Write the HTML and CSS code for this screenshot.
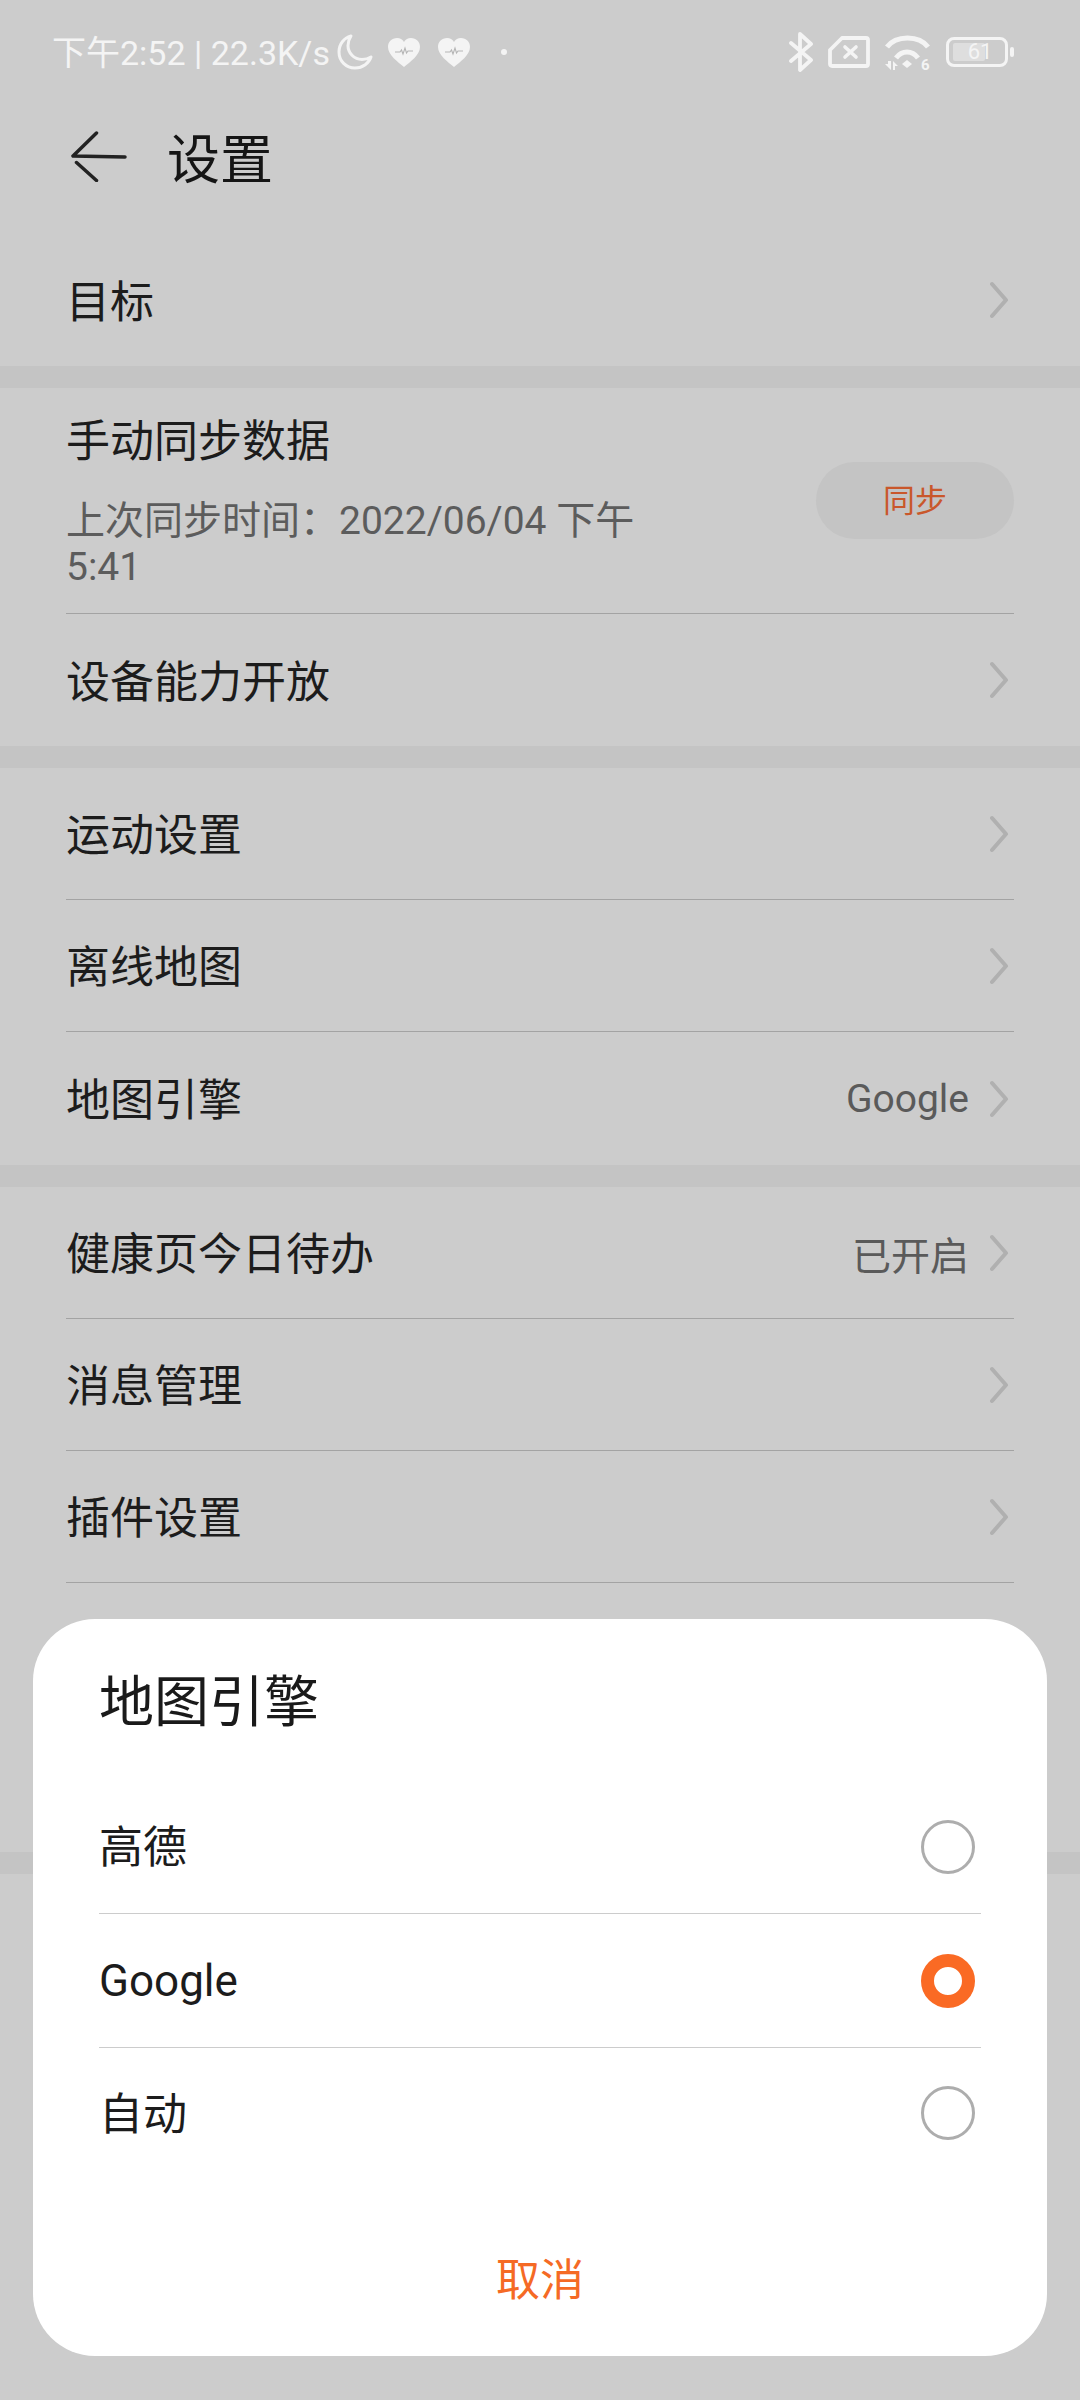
FILE: index.html
```html
<!DOCTYPE html>
<html lang="zh-CN">
<head>
    <meta charset="UTF-8">
    <meta name="viewport" content="width=device-width, initial-scale=1.0">
    <title>设置</title>
    <link rel="stylesheet" href="styles.css">
</head>
<body>
    <svg class="defs" width="0" height="0">
        <symbol id="chevron" viewBox="0 0 20 40">
            <path d="M2 4 L16 20 L2 36" fill="none" stroke="#b0b0b0" stroke-width="4" stroke-linecap="round" stroke-linejoin="round"/>
        </symbol>
        <symbol id="heart" viewBox="0 0 32 29">
            <path d="M16 29 C10 24 0 17 0 9 C0 3.500 4 0 9 0 C12 0 14.500 1.500 16 4 C17.500 1.500 20 0 23 0 C28 0 32 3.500 32 9 C32 17 22 24 16 29 Z" fill="#f4f4f4"/>
            <path d="M7 14 H12 L13.500 12 L15 16 L17 10 L18.500 15 L20 13 H25" fill="none" stroke="#b5b5b5" stroke-width="1.100"/>
        </symbol>
    </svg>

    <div class="status-bar">
        <div class="status-left">
            <span class="status-text">下午2:52 | 22.3K/s</span>
            <svg class="icon-moon" width="36" height="36" viewBox="0 0 36 36">
                <path d="M14 2 C7 4 2 10 2 18 C2 27 9 34 18 34 C26 34 32 29 34 23 C31 25 28 25.500 25 25.500 C17 25.500 11 19 11 11.500 C11 8 12 5 14 2 Z" fill="none" stroke="#f4f4f4" stroke-width="3" stroke-linejoin="round"/>
            </svg>
            <svg class="icon-heart" width="32" height="29"><use href="#heart"/></svg>
            <svg class="icon-heart" width="32" height="29"><use href="#heart"/></svg>
            <span class="status-dot"></span>
        </div>
        <div class="status-right">
            <svg width="26" height="40" viewBox="0 0 26 40">
                <path d="M3 11 L23 28 L12 38 V2 L23 12 L3 29" fill="none" stroke="#f4f4f4" stroke-width="3.800" stroke-linecap="round" stroke-linejoin="round"/>
            </svg>
            <svg width="42" height="32" viewBox="0 0 42 32">
                <path d="M14 2 H38 Q40 2 40 4 V28 Q40 30 38 30 H4 Q2 30 2 28 V14 Z" fill="none" stroke="#f4f4f4" stroke-width="3.800" stroke-linejoin="round"/>
                <path d="M17 11 L28 21 M28 11 L17 21" stroke="#f4f4f4" stroke-width="3.600" stroke-linecap="round"/>
            </svg>
            <svg width="48" height="44" viewBox="0 0 48 44">
                <path d="M3 17 C12 5 35 5 44 17" fill="none" stroke="#f4f4f4" stroke-width="5"/>
                <path d="M12 28 C18 20 28 20 34 28" fill="none" stroke="#f4f4f4" stroke-width="5"/>
                <path d="M18 34 L23 30 L28 34 L23 38 Z" fill="#f4f4f4"/>
                <path d="M1 34 H4 V31 H7 V40 Z M9 31 V40 H11 V36 H14 Z" fill="#f4f4f4"/>
                <text class="wifi-num" x="37" y="40">6</text>
            </svg>
            <div class="battery">
                <div class="battery-body">
                    <div class="battery-fill"></div>
                    <span class="battery-num">61</span>
                </div>
                <span class="battery-nub"></span>
            </div>
        </div>
    </div>

    <div class="header">
        <svg class="back" width="56" height="52" viewBox="0 0 56 52">
            <path d="M25.500 3 L2 26 L54 27 M5.500 32.500 L25.500 50.500" fill="none" stroke="#222" stroke-width="3.500" stroke-linecap="round" stroke-linejoin="round"/>
        </svg>
        <h1 class="page-title">设置</h1>
    </div>

    <div class="section section-first">
        <div class="row">
            <span class="row-title">目标</span>
            <svg class="chevron"><use href="#chevron"/></svg>
        </div>
    </div>
    <div class="band"></div>

    <div class="section">
        <div class="row sync-row">
            <div class="sync-info">
                <div class="row-title">手动同步数据</div>
                <div class="sync-time">上次同步时间：2022/06/04 下午 5:41</div>
            </div>
            <div class="sync-btn">同步</div>
        </div>
        <div class="row">
            <span class="row-title">设备能力开放</span>
            <svg class="chevron"><use href="#chevron"/></svg>
        </div>
    </div>
    <div class="band"></div>

    <div class="section">
        <div class="row">
            <span class="row-title">运动设置</span>
            <svg class="chevron"><use href="#chevron"/></svg>
        </div>
        <div class="row">
            <span class="row-title">离线地图</span>
            <svg class="chevron"><use href="#chevron"/></svg>
        </div>
        <div class="row row-tall">
            <span class="row-title">地图引擎</span>
            <span class="row-value">Google</span>
            <svg class="chevron"><use href="#chevron"/></svg>
        </div>
    </div>
    <div class="band"></div>

    <div class="section section-last">
        <div class="row">
            <span class="row-title">健康页今日待办</span>
            <span class="row-value">已开启</span>
            <svg class="chevron"><use href="#chevron"/></svg>
        </div>
        <div class="row">
            <span class="row-title">消息管理</span>
            <svg class="chevron"><use href="#chevron"/></svg>
        </div>
        <div class="row with-line">
            <span class="row-title">插件设置</span>
            <svg class="chevron"><use href="#chevron"/></svg>
        </div>
    </div>
    <div class="band"></div>

    <div class="dialog">
        <h2 class="dialog-title">地图引擎</h2>
        <div class="options">
            <div class="option">
                <span class="option-label">高德</span>
                <span class="radio"></span>
            </div>
            <div class="option">
                <span class="option-label latin">Google</span>
                <span class="radio checked"></span>
            </div>
            <div class="option">
                <span class="option-label">自动</span>
                <span class="radio"></span>
            </div>
        </div>
        <div class="dialog-cancel">取消</div>
    </div>
</body>
</html>
```

FILE: styles.css
```css
*{
    margin: 0;
    padding: 0;
    box-sizing: border-box;
}
body{
    position: relative;
    width: 1080px;
    height: 2400px;
    overflow: hidden;
    background-color: #cccccc;
    font-family: Roboto, "Noto Sans CJK SC", sans-serif;
    color: #1c1c1c;
}
.defs{
    position: absolute;
}

/* status bar */
.status-bar{
    display: flex;
    justify-content: space-between;
    align-items: center;
    height: 104px;
    padding: 0 66px 0 52px;
    color: #f4f4f4;
}
.status-left,.status-right{
    display: flex;
    align-items: center;
}
.status-text{
    margin-bottom: 3px;
    font-size: 34px;
    white-space: nowrap;
}
.icon-moon{
    margin-left: 7px;
}
.icon-heart{
    margin-left: 18px;
}
.icon-moon + .icon-heart{
    margin-left: 15px;
}
.status-dot{
    width: 6px;
    height: 6px;
    margin-left: 31px;
    border-radius: 50%;
    background-color: #f4f4f4;
}
.status-right{
    gap: 14px;
}
.wifi-num{
    font-size: 15px;
    font-weight: bold;
    fill: #f4f4f4;
}
.battery{
    display: flex;
    align-items: center;
    gap: 2px;
}
.battery-body{
    position: relative;
    display: flex;
    align-items: center;
    justify-content: center;
    width: 62px;
    height: 30px;
    border: 3.500px solid #f4f4f4;
    border-radius: 8px;
}
.battery-fill{
    position: absolute;
    left: 4px;
    top: 3px;
    bottom: 3px;
    width: 32px;
    border-radius: 2px;
    background-color: #dedede;
}
.battery-num{
    position: relative;
    margin-left: 6px;
    font-size: 22px;
    line-height: 1;
    color: #f4f4f4;
}
.battery-nub{
    width: 4px;
    height: 10px;
    border-radius: 2px;
    background-color: #f4f4f4;
}

/* header */
.header{
    display: flex;
    align-items: center;
    height: 104px;
    padding-left: 71px;
}
.back{
    flex-shrink: 0;
}
.page-title{
    margin-left: 40px;
    font-size: 53px;
    font-weight: normal;
    color: #151515;
}

/* list */
.section{
    padding: 0 66px;
}
.section-first{
    margin-top: 26px;
}
.band{
    height: 22px;
    background-color: #c4c4c4;
}
.section-last{
    height: 665px;
}
.row{
    display: flex;
    align-items: center;
    height: 132px;
    border-bottom: 1px solid #a3a3a3;
}
.section > .row:last-child{
    border-bottom: none;
}
.section > .row.with-line:last-child{
    border-bottom: 1px solid #a3a3a3;
}
.section > .row.row-tall{
    height: 133px;
}
.row-title{
    flex: 1;
    font-size: 44px;
    line-height: 60px;
}
.row > .row-title{
    margin-top: 5px;
}
.row-value{
    margin-right: 21px;
    font-size: 39px;
    color: #5a5a5a;
}
.chevron{
    width: 20px;
    height: 40px;
    flex-shrink: 0;
    margin-right: 4px;
}
.sync-row{
    align-items: flex-start;
    height: 226px;
    padding-top: 24px;
}
.sync-info{
    width: 600px;
}
.sync-time{
    margin-top: 26px;
    font-size: 39px;
    line-height: 46px;
    color: #5c5c5c;
}
.sync-btn{
    display: flex;
    align-items: center;
    justify-content: center;
    width: 198px;
    height: 77px;
    margin-top: 50px;
    margin-left: auto;
    padding-bottom: 5px;
    border-radius: 39px;
    background-color: #c4c4c4;
    font-size: 32px;
    color: #c9572b;
}

/* dialog */
.dialog{
    position: absolute;
    left: 33px;
    top: 1619px;
    width: 1014px;
    height: 737px;
    padding: 43px 66px 0 66px;
    border-radius: 62px;
    background-color: #ffffff;
}
.dialog-title{
    font-size: 55px;
    line-height: 80px;
    font-weight: normal;
    color: #1a1a1a;
}
.options{
    margin-top: 38px;
}
.option{
    display: flex;
    justify-content: space-between;
    align-items: center;
    height: 134px;
    padding-right: 6px;
    border-bottom: 1px solid #cccccc;
    font-size: 44px;
}
.option:last-child{
    border-bottom: none;
    height: 130px;
}
.option-label{
    margin-bottom: 5px;
}
.option-label.latin{
    margin-bottom: 0;
}
.radio{
    width: 54px;
    height: 54px;
    border: 3px solid #adadad;
    border-radius: 50%;
}
.radio.checked{
    border: 13px solid #fa6a24;
}
.dialog-cancel{
    margin-top: 73px;
    text-align: center;
    font-size: 44px;
    line-height: 60px;
    color: #f56a25;
}
```
